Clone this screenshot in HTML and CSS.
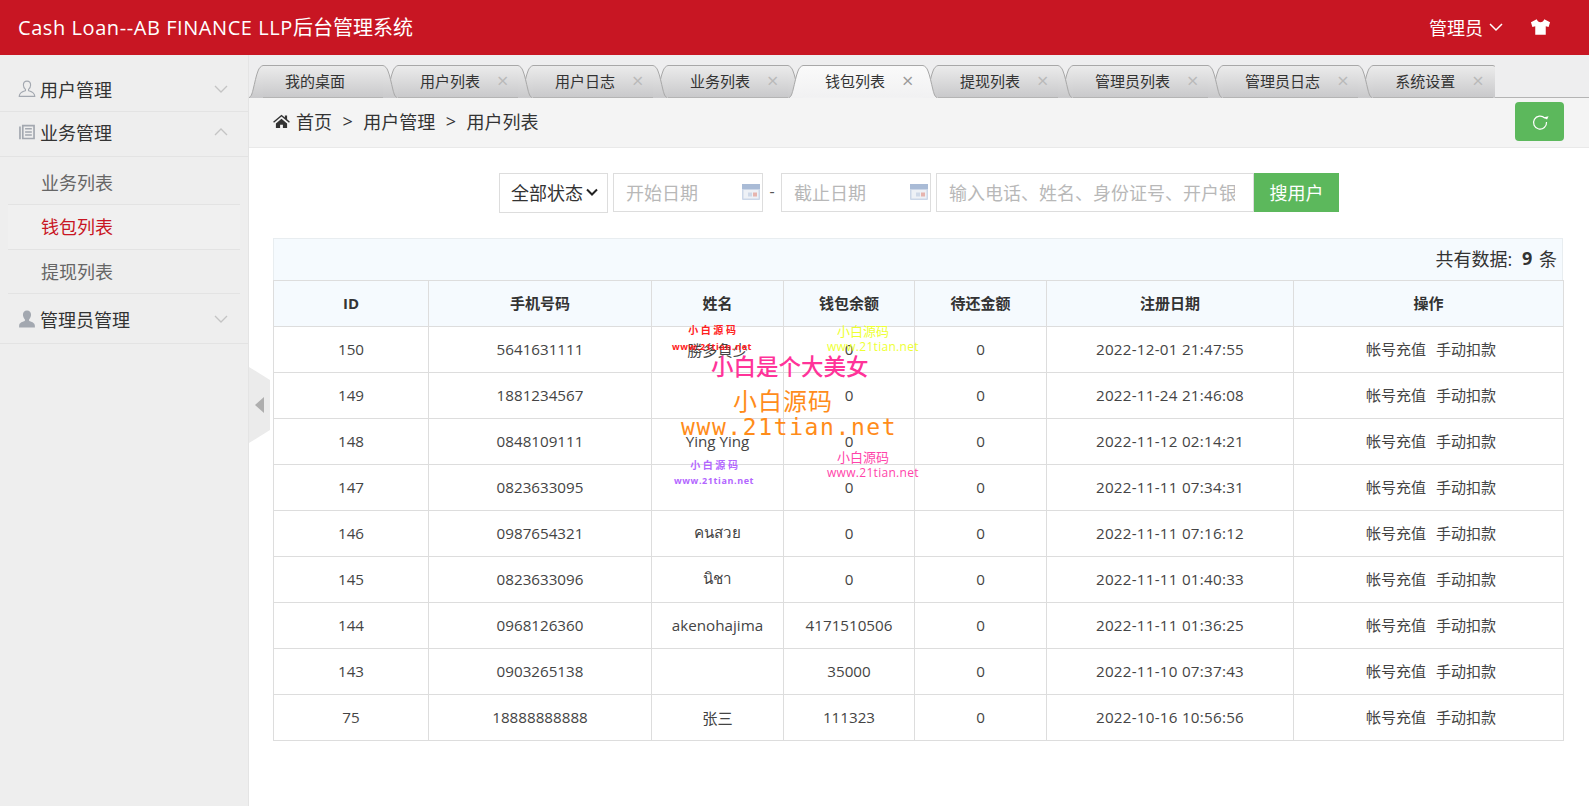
FILE: index.html
```html
<!DOCTYPE html>
<html lang="zh-CN">
<head>
<meta charset="utf-8">
<title>Cash Loan--AB FINANCE LLP后台管理系统</title>
<link rel="stylesheet" href="styles.css">
</head>
<body>
<svg class="defs" width="0" height="0" aria-hidden="true">
  <defs>
    <linearGradient id="tab-off" x1="0" y1="0" x2="0" y2="1"><stop offset="0" stop-color="#ebebeb"/><stop offset="1" stop-color="#c9c9cb"/></linearGradient>
    <linearGradient id="tab-on" x1="0" y1="0" x2="0" y2="1"><stop offset="0" stop-color="#fafafa"/><stop offset="1" stop-color="#f1f1f2"/></linearGradient>
    <symbol id="cap-l" viewBox="0 0 14 33"><path class="cap-fill" d="M0 33C2 32 3 29 4 25C6 17 7 11 9 6C10 3 12 1 14 1V33Z"/><path class="cap-line" d="M0 32.500C2 32 3 29 4 25C6 17 7 11 9 6C10 3 12 1 14 .5"/></symbol>
    <symbol id="cap-r" viewBox="0 0 14 33"><path class="cap-fill" d="M14 33C12 32 11 29 10 25C8 17 7 11 5 6C4 3 2 1 0 1V33Z"/><path class="cap-line" d="M14 32.500C12 32 11 29 10 25C8 17 7 11 5 6C4 3 2 1 0 .5"/></symbol>
  </defs>
</svg>

<header class="topbar">
  <div class="brand"><span class="brand-latin">Cash Loan--AB FINANCE LLP</span>后台管理系统</div>
  <div class="top-actions">
    <span class="admin">管理员<svg class="admin-chev" viewBox="0 0 14 10"><path d="M1 2l6 6 6-6"/></svg></span>
    <svg class="shirt" viewBox="0 0 22 18"><path d="M7 1 1 4l1.500 5 3-.8V17h11V8.200l3 .8L21 4l-6-3c-.8 2-2.200 3-4 3S7.800 3 7 1z"/></svg>
  </div>
</header>

<div class="main">
  <aside class="sidebar">
    <div class="nav-head nav-first">
      <svg class="nav-icon" viewBox="0 0 16 16"><path class="ic-line" d="M8 1c2 0 3.200 1.500 3.200 3.500 0 1.600-.8 3-1.800 3.800v1.200c2 .6 5.500 1.500 5.500 5H1.100c0-3.500 3.500-4.400 5.500-5V8.300c-1-.8-1.800-2.200-1.800-3.800C4.800 2.500 6 1 8 1z"/></svg>
      <span class="nav-text">用户管理</span>
      <svg class="nav-chev" viewBox="0 0 14 8"><path d="M1 1l6 6 6-6"/></svg>
    </div>
    <div class="nav-head nav-second">
      <svg class="nav-icon" viewBox="0 0 16 16"><path class="ic-fill" d="M1 3h1.500v11.500H1zM3.500 1.500H15v13H3.500zM5 3v10h8.500V3zM6.300 4.500h6v1.300h-6zm0 2.800h6v1.300h-6zm0 2.800h6v1.300h-6z" fill-rule="evenodd"/></svg>
      <span class="nav-text">业务管理</span>
      <svg class="nav-chev" viewBox="0 0 14 8"><path d="M1 7l6-6 6 6"/></svg>
    </div>
    <ul class="subnav">
      <li class="sub-item sub-first">业务列表</li>
      <li class="sub-item sub-active">钱包列表</li>
      <li class="sub-item sub-last">提现列表</li>
    </ul>
    <div class="nav-head nav-third">
      <svg class="nav-icon" viewBox="0 0 16 16"><path class="ic-fill" d="M8 .5c2.300 0 3.600 1.700 3.600 3.800 0 1.700-.8 3.100-1.700 4v1.400c2.200.7 5.100 1.500 5.100 4.300v1.500H1v-1.500c0-2.800 2.900-3.600 5.100-4.300V8.300c-.9-.9-1.700-2.300-1.700-4C4.400 2.200 5.700.5 8 .5z"/></svg>
      <span class="nav-text">管理员管理</span>
      <svg class="nav-chev" viewBox="0 0 14 8"><path d="M1 1l6 6 6-6"/></svg>
    </div>
  </aside>

  <div class="collapse-handle"><span class="collapse-arrow"></span></div>

  <section class="content">
    <div class="tabbar">
      <nav class="tab-list">
        <a class="tab tab-plain"><svg class="cap" fill="url(#tab-off)"><use href="#cap-l"/></svg><span class="tab-mid tab-mid-off"><span>我的桌面</span></span><svg class="cap" fill="url(#tab-off)"><use href="#cap-r"/></svg></a>
        <a class="tab"><svg class="cap" fill="url(#tab-off)"><use href="#cap-l"/></svg><span class="tab-mid tab-mid-off"><span>用户列表</span><i class="tab-x">×</i></span><svg class="cap" fill="url(#tab-off)"><use href="#cap-r"/></svg></a>
        <a class="tab"><svg class="cap" fill="url(#tab-off)"><use href="#cap-l"/></svg><span class="tab-mid tab-mid-off"><span>用户日志</span><i class="tab-x">×</i></span><svg class="cap" fill="url(#tab-off)"><use href="#cap-r"/></svg></a>
        <a class="tab"><svg class="cap" fill="url(#tab-off)"><use href="#cap-l"/></svg><span class="tab-mid tab-mid-off"><span>业务列表</span><i class="tab-x">×</i></span><svg class="cap" fill="url(#tab-off)"><use href="#cap-r"/></svg></a>
        <a class="tab tab-active"><svg class="cap" fill="url(#tab-on)"><use href="#cap-l"/></svg><span class="tab-mid tab-mid-on"><span>钱包列表</span><i class="tab-x">×</i></span><svg class="cap" fill="url(#tab-on)"><use href="#cap-r"/></svg></a>
        <a class="tab"><svg class="cap" fill="url(#tab-off)"><use href="#cap-l"/></svg><span class="tab-mid tab-mid-off"><span>提现列表</span><i class="tab-x">×</i></span><svg class="cap" fill="url(#tab-off)"><use href="#cap-r"/></svg></a>
        <a class="tab"><svg class="cap" fill="url(#tab-off)"><use href="#cap-l"/></svg><span class="tab-mid tab-mid-off"><span>管理员列表</span><i class="tab-x">×</i></span><svg class="cap" fill="url(#tab-off)"><use href="#cap-r"/></svg></a>
        <a class="tab"><svg class="cap" fill="url(#tab-off)"><use href="#cap-l"/></svg><span class="tab-mid tab-mid-off"><span>管理员日志</span><i class="tab-x">×</i></span><svg class="cap" fill="url(#tab-off)"><use href="#cap-r"/></svg></a>
        <a class="tab"><svg class="cap" fill="url(#tab-off)"><use href="#cap-l"/></svg><span class="tab-mid tab-mid-off"><span>系统设置</span><i class="tab-x">×</i></span><svg class="cap" fill="url(#tab-off)"><use href="#cap-r"/></svg></a>
      </nav>
    </div>

    <div class="crumbbar">
      <div class="crumbs">
        <svg class="home" viewBox="0 0 18 15"><path d="M9 .8 0 8.200l1 1.200L9 2.800l8 6.600 1-1.200-3-2.500V1.500h-2.400v2.300zM3 10.200V15h4.500v-3.500h3V15H15v-4.800L9 5.200z"/></svg>
        <span>首页</span><span class="sep">&gt;</span><span>用户管理</span><span class="sep">&gt;</span><span>用户列表</span>
      </div>
      <button class="refresh" type="button"><svg viewBox="0 0 18 18"><path class="refresh-arc" d="M13.800 5.200A6.500 6.500 0 1 0 15.500 9"/><path class="refresh-tip" d="M12 5.500h4.500V2z" transform="rotate(25 14 5)"/></svg></button>
    </div>

    <div class="page">
      <form class="filters">
        <div class="select">全部状态<svg viewBox="0 0 12 8"><path d="M1 1.500l5 5 5-5"/></svg></div>
        <div class="date-box"><input class="field" placeholder="开始日期"><svg class="cal" viewBox="0 0 18 16"><rect width="18" height="16" rx="1" fill="#ccd7e8"/><rect width="18" height="5" fill="#a9bbd6"/><rect x="1.500" y="6" width="15" height="8.500" fill="#eef1f6"/><rect x="11" y="8.500" width="4" height="4" fill="#e6b4ae"/><rect x="6" y="8.500" width="4" height="4" fill="#cfd9e8"/></svg></div>
        <span class="dash">-</span>
        <div class="date-box date-second"><input class="field" placeholder="截止日期"><svg class="cal" viewBox="0 0 18 16"><rect width="18" height="16" rx="1" fill="#ccd7e8"/><rect width="18" height="5" fill="#a9bbd6"/><rect x="1.500" y="6" width="15" height="8.500" fill="#eef1f6"/><rect x="11" y="8.500" width="4" height="4" fill="#e6b4ae"/><rect x="6" y="8.500" width="4" height="4" fill="#cfd9e8"/></svg></div>
        <input class="field field-search" placeholder="输入电话、姓名、身份证号、开户银行卡号">
        <button class="search" type="button"><span class="search-label">搜用户</span></button>
      </form>

      <div class="table-wrap">
        <div class="summary">共有数据: <strong>9</strong> 条</div>
        <table class="data">
          <colgroup><col class="c1"><col class="c2"><col class="c3"><col class="c4"><col class="c5"><col class="c6"><col class="c7"></colgroup>
          <thead><tr><th>ID</th><th>手机号码</th><th>姓名</th><th>钱包余额</th><th>待还金额</th><th>注册日期</th><th>操作</th></tr></thead>
          <tbody>
            <tr><td>150</td><td>5641631111</td><td>勝多負少</td><td>0</td><td>0</td><td class="date">2022-12-01 21:47:55</td><td class="ops"><a>帐号充值</a><a>手动扣款</a></td></tr>
            <tr><td>149</td><td>1881234567</td><td></td><td>0</td><td>0</td><td class="date">2022-11-24 21:46:08</td><td class="ops"><a>帐号充值</a><a>手动扣款</a></td></tr>
            <tr><td>148</td><td>0848109111</td><td>Ying Ying</td><td>0</td><td>0</td><td class="date">2022-11-12 02:14:21</td><td class="ops"><a>帐号充值</a><a>手动扣款</a></td></tr>
            <tr><td>147</td><td>0823633095</td><td></td><td>0</td><td>0</td><td class="date">2022-11-11 07:34:31</td><td class="ops"><a>帐号充值</a><a>手动扣款</a></td></tr>
            <tr><td>146</td><td>0987654321</td><td>คนสวย</td><td>0</td><td>0</td><td class="date">2022-11-11 07:16:12</td><td class="ops"><a>帐号充值</a><a>手动扣款</a></td></tr>
            <tr><td>145</td><td>0823633096</td><td>นิชา</td><td>0</td><td>0</td><td class="date">2022-11-11 01:40:33</td><td class="ops"><a>帐号充值</a><a>手动扣款</a></td></tr>
            <tr><td>144</td><td>0968126360</td><td>akenohajima</td><td>4171510506</td><td>0</td><td class="date">2022-11-11 01:36:25</td><td class="ops"><a>帐号充值</a><a>手动扣款</a></td></tr>
            <tr><td>143</td><td>0903265138</td><td></td><td>35000</td><td>0</td><td class="date">2022-11-10 07:37:43</td><td class="ops"><a>帐号充值</a><a>手动扣款</a></td></tr>
            <tr><td>75</td><td>18888888888</td><td>张三</td><td>111323</td><td>0</td><td class="date">2022-10-16 10:56:56</td><td class="ops"><a>帐号充值</a><a>手动扣款</a></td></tr>
          </tbody>
        </table>
        <div class="wm wm-red"><b>小 白 源 码</b><b class="wm-url">www.21tian.net</b></div>
        <div class="wm wm-yellow"><b>小白源码</b><b class="wm-url">www.21tian.net</b></div>
        <div class="wm wm-main">小白是个大美女</div>
        <div class="wm wm-orange"><b>小白源码</b><b class="wm-url">www.21tian.net</b></div>
        <div class="wm wm-violet"><b>小 白 源 码</b><b class="wm-url">www.21tian.net</b></div>
        <div class="wm wm-pink"><b>小白源码</b><b class="wm-url">www.21tian.net</b></div>
      </div>
    </div>
  </section>
</div>
</body>
</html>
```

FILE: styles.css
```css
* { box-sizing: border-box; }
html, body { margin: 0; height: 100%; }
body {
  display: flex;
  flex-direction: column;
  overflow: hidden;
  font-family: "Open Sans", "Noto Sans CJK SC", sans-serif;
  color: #333;
  background: #fff;
}
.defs { position: absolute; }

/* top bar */
.topbar {
  height: 55px;
  flex: none;
  background: #c81623;
  color: #fff;
  display: flex;
  align-items: center;
  justify-content: space-between;
  padding: 0 38px 2px 18px;
}
.brand { font-size: 20px; }
.brand-latin { letter-spacing: .57px; }
.top-actions { display: flex; align-items: center; }
.admin { display: flex; align-items: center; font-size: 18px; }
.admin-chev { width: 14px; height: 10px; margin-left: 6px; fill: none; stroke: #fff; stroke-width: 1.5; }
.shirt { width: 21px; height: 18px; margin-left: 27px; fill: #fff; }

.main { flex: 1; display: flex; position: relative; min-height: 0; }

/* sidebar */
.sidebar { width: 249px; flex: none; background: #eeeeee; padding-top: 10px; border-right: 1px solid #e4e4e4; }
.nav-head {
  display: flex;
  align-items: center;
  padding: 0 20px 0 18px;
  font-size: 18px;
  color: #333;
  border-bottom: 1px solid #e3e3e3;
}
.nav-first { height: 47px; padding-top: 1px; }
.nav-second { height: 45px; padding-bottom: 4px; }
.nav-third { height: 50px; }
.nav-icon { width: 18px; height: 18px; margin-right: 4px; flex: none; }
.ic-line { fill: none; stroke: #a3a8b0; stroke-width: 1; }
.ic-fill { fill: #a3a8b0; }
.nav-text { flex: 1; }
.nav-chev { width: 14px; height: 8px; fill: none; stroke: #c4c4c4; stroke-width: 1.300; }
.subnav { list-style: none; margin: 0; padding: 0 8px; font-size: 18px; color: #666; }
.sub-item { height: 44px; padding-left: 33px; display: flex; align-items: center; border-bottom: 1px solid #e3e3e3; }
.sub-first { height: 48px; padding-top: 2px; }
.sub-active { height: 45px; padding-bottom: 2px; color: #c81623; background: #f0f0f0; }
.sub-last { padding-bottom: 2px; }

.collapse-handle {
  position: absolute;
  left: 249px;
  top: 312px;
  width: 21px;
  height: 76px;
  background: #ebebeb;
  clip-path: polygon(0 0, 100% 17%, 100% 83%, 0 100%);
  display: flex;
  align-items: center;
  padding-left: 6px;
}
.collapse-arrow { width: 0; height: 0; border: 8px solid transparent; border-left: 0; border-right: 9px solid #aeaeae; }

/* content */
.content { flex: 1; min-width: 0; display: flex; flex-direction: column; }
.tabbar { height: 43px; flex: none; padding-top: 10px; background: #eeeeef; border-bottom: 1px solid #b4b4b4; }
.tab-list { width: 1246px; height: 33px; display: flex; overflow: hidden; }
.tab { display: flex; flex: none; height: 33px; margin-left: -13px; position: relative; font-size: 15px; color: #333; }
.tab:first-child { margin-left: 0; z-index: 9; }
.tab:nth-child(2) { z-index: 8; }
.tab:nth-child(3) { z-index: 7; }
.tab:nth-child(4) { z-index: 6; }
.tab:nth-child(6) { z-index: 5; }
.tab:nth-child(7) { z-index: 4; }
.tab:nth-child(8) { z-index: 3; }
.tab:nth-child(9) { z-index: 2; }
.tab-active { z-index: 20; }
.cap { width: 14px; height: 33px; flex: none; overflow: visible; }
.cap-line { fill: none; stroke: #a8a8a8; stroke-width: 1; }
.tab-mid {
  display: flex;
  align-items: center;
  padding: 0 11px 2px 22px;
  border-top: 1px solid #a8a8a8;
  border-bottom: 1px solid #b4b4b4;
}
.tab-plain .tab-mid { padding-right: 38px; }
.tab-mid-off { background: linear-gradient(#ebebeb, #c9c9cb); }
.tab-mid-on { background: linear-gradient(#fafafa, #f1f1f2); border-bottom-color: #f2f2f3; }
.tab-x { width: 10px; margin-left: 17px; font-style: normal; font-size: 20px; line-height: 20px; text-align: center; color: #b9b9b9; }
.tab-active .tab-x { color: #9a9a9a; }

.crumbbar {
  height: 50px;
  flex: none;
  background: #f4f4f4;
  border-bottom: 1px solid #e9e9e9;
  display: flex;
  align-items: center;
  justify-content: space-between;
  padding: 0 25px 3px 24px;
}
.crumbs { display: flex; align-items: center; font-size: 18px; }
.home { width: 17px; height: 14px; margin-right: 6px; fill: #333; }
.sep { margin: 0 10.500px; font-size: 18px; }
.refresh { width: 49px; height: 39px; margin-top: 1px; border: 0; border-radius: 4px; background: #5cb85c; padding: 0; display: flex; align-items: center; justify-content: center; }
.refresh svg { width: 18px; height: 18px; }
.refresh-arc { fill: none; stroke: #fff; stroke-width: 1.200; }
.refresh-tip { fill: #fff; }

.page { flex: 1; padding: 25px 24px 0 24px; min-height: 0; }
.filters { display: flex; justify-content: center; align-items: flex-start; }
.select {
  width: 109px;
  height: 40px;
  border: 1px solid #ddd;
  display: flex;
  align-items: center;
  padding: 0 0 2px 11px;
  font-size: 18px;
  color: #333;
  margin-right: 5px;
}
.select svg { width: 12px; height: 8px; margin-left: 3px; fill: none; stroke: #222; stroke-width: 2; }
.date-box { width: 150px; height: 39px; position: relative; }
.field {
  width: 100%;
  height: 39px;
  border: 1px solid #ddd;
  padding: 0 12px;
  font: 18px "Open Sans", "Noto Sans CJK SC", sans-serif;
  color: #333;
  background: #fff;
  outline: 0;
  display: block;
}
.field::placeholder { color: #b8b8b8; opacity: 1; }
.cal { position: absolute; right: 3px; top: 11px; width: 18px; height: 16px; }
.dash { width: 18px; text-align: center; font-size: 16px; line-height: 36px; color: #555; }
.date-second { margin-right: 5px; }
.field-search { width: 318px; padding-right: 18px; }
.search { width: 85px; height: 39px; border: 0; background: #5cb85c; color: #fff; font: 18px "Open Sans", "Noto Sans CJK SC", sans-serif; padding: 0 0 2px; }

.table-wrap { position: relative; margin-top: 25px; width: 1290px; }
.summary {
  height: 42px;
  background: #f5fafe;
  border: 1px solid #e8edf0;
  border-bottom: 0;
  display: flex;
  align-items: center;
  justify-content: flex-end;
  font-size: 18px;
  padding: 0 5px 3px 0;
  white-space: pre;
}
.summary strong { margin: 0 2px 0 5px; }
.data { width: 1290px; border-collapse: collapse; table-layout: fixed; font-size: 15.2px; color: #444; }
.c1 { width: 155px; }
.c2 { width: 223px; }
.c3 { width: 132px; }
.c4 { width: 131px; }
.c5 { width: 132px; }
.c6 { width: 247px; }
.c7 { width: 270px; }
.data th, .data td { border: 1px solid #ddd; text-align: center; padding: 0 0 2px; height: 46px; font-weight: 400; }
.data th { font-weight: 700; font-size: 15px; color: #333; background: #f5fafe; }
.data .date { letter-spacing: .25px; }
.data .ops { padding-left: 5px; }
.data a { color: #444; font-size: 15px; }
.data a + a { margin-left: 10px; }

/* watermark */
.wm { position: absolute; display: flex; flex-direction: column; white-space: nowrap; pointer-events: none; }
.wm b { font-weight: 700; }
.wm-red { left: 399px; top: 85px; color: #ff2020; font-size: 10px; line-height: 15px; gap: 1px; align-items: center; }
.wm-red .wm-url, .wm-violet .wm-url { font-size: 9px; letter-spacing: .6px; }
.wm-yellow { left: 554px; top: 86px; color: #eeff33; font-size: 13px; line-height: 15px; }
.wm-yellow b, .wm-pink b { font-weight: 400; margin-left: 10px; }
.wm-yellow .wm-url, .wm-pink .wm-url { font-size: 12px; letter-spacing: .3px; margin-left: 0; }
.wm-main { left: 438px; top: 114px; color: #ff3399; font-size: 22.500px; line-height: 30px; font-weight: 500; }
.wm-orange { left: 408px; top: 148px; color: #ff8c1a; font-size: 24px; line-height: 30px; }
.wm-orange b { font-weight: 400; letter-spacing: 1px; margin-left: 52px; }
.wm-orange .wm-url { margin-left: 0; font-family: "DejaVu Sans Mono", monospace; font-size: 23px; line-height: 22px; letter-spacing: 1.600px; }
.wm-violet { left: 401px; top: 220px; color: #b366ff; font-size: 10px; line-height: 15px; align-items: center; }
.wm-pink { left: 554px; top: 212px; color: #ff44aa; font-size: 13px; line-height: 15px; }
```
